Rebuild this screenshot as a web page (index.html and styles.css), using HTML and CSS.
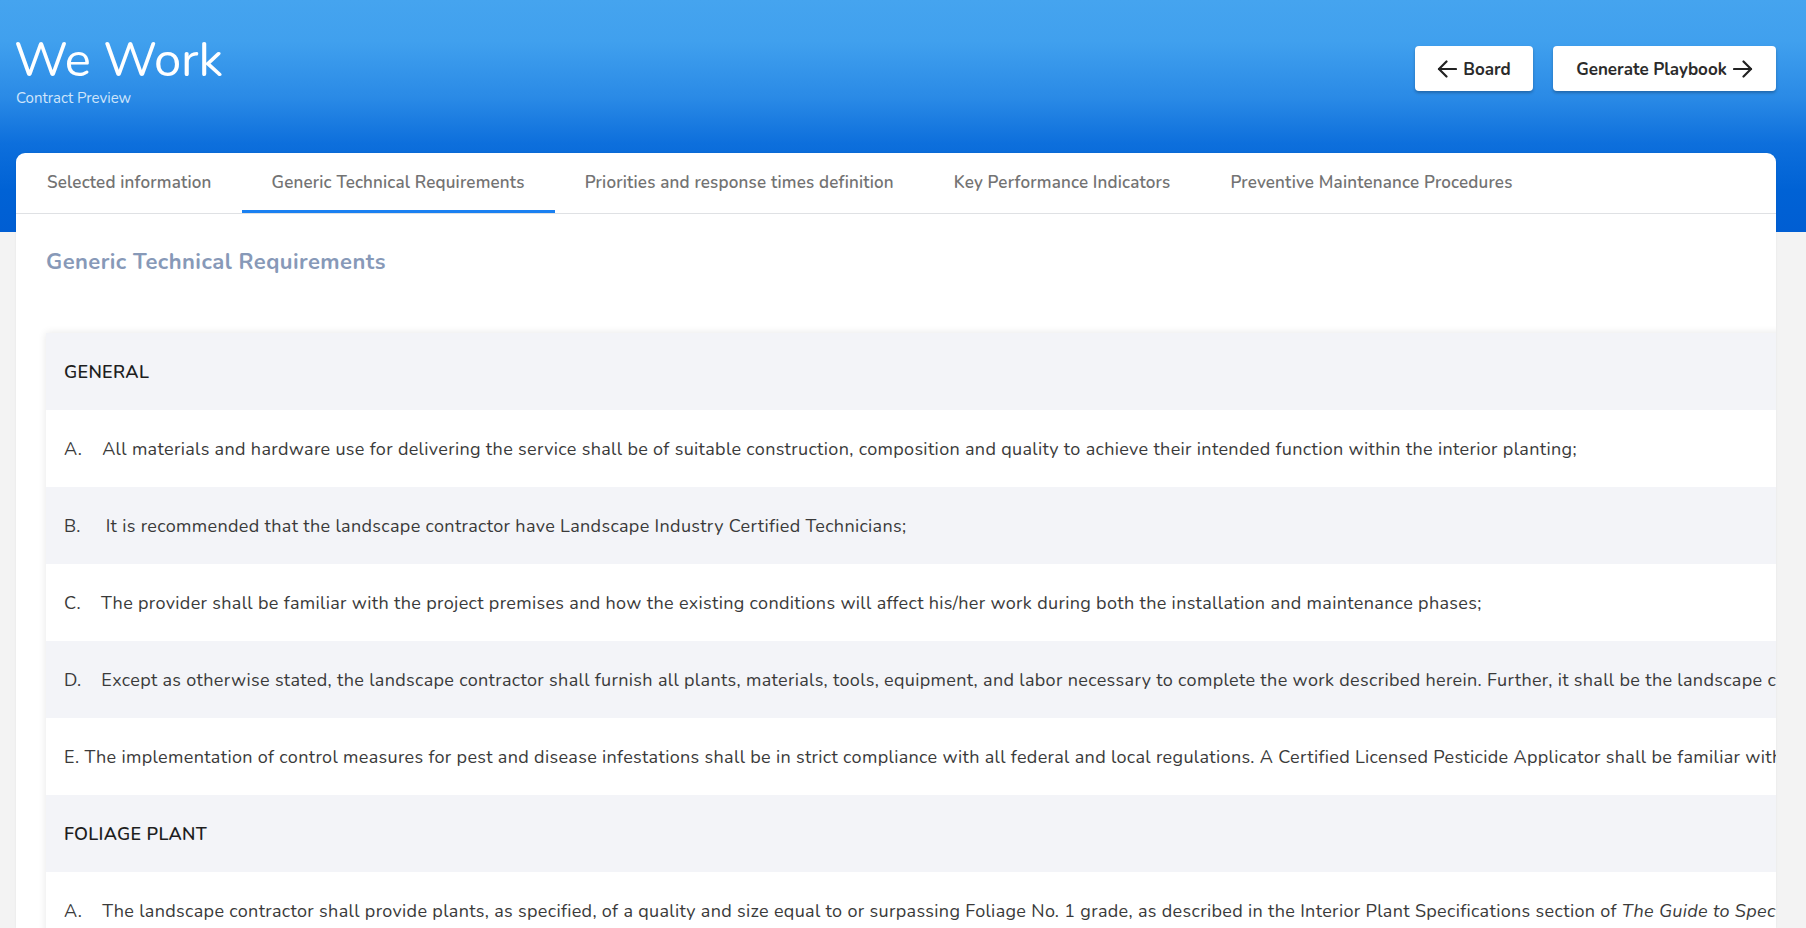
FILE: index.html
```html
<!DOCTYPE html>
<html lang="en">
<head>
<meta charset="utf-8">
<title>We Work - Contract Preview</title>
<link rel="stylesheet" href="styles.css">
</head>
<body>
<div class="hero">
  <div class="hero-bar">
    <div class="brand">
      <h1 class="brand-title">We Work</h1>
      <div class="brand-sub">Contract Preview</div>
    </div>
    <div class="actions">
      <button class="btn btn-board">
        <svg class="ico" width="20" height="18" viewBox="0 0 20 18" fill="none" stroke="#222" stroke-width="2.2" stroke-linecap="round" stroke-linejoin="round"><path d="M19 9H2"/><path d="M9.5 1.5L2 9l7.5 7.5"/></svg>
        <span>Board</span>
      </button>
      <button class="btn btn-gen">
        <span>Generate Playbook</span>
        <svg class="ico" width="20" height="18" viewBox="0 0 20 18" fill="none" stroke="#222" stroke-width="2.2" stroke-linecap="round" stroke-linejoin="round"><path d="M1 9h17"/><path d="M10.5 1.5L18 9l-7.5 7.5"/></svg>
      </button>
    </div>
  </div>
</div>
<main class="main">
  <section class="card">
    <nav class="tabs">
      <a class="tab">Selected information</a>
      <a class="tab active">Generic Technical Requirements</a>
      <a class="tab">Priorities and response times definition</a>
      <a class="tab">Key Performance Indicators</a>
      <a class="tab">Preventive Maintenance Procedures</a>
    </nav>
    <div class="card-body">
      <h2 class="section-title">Generic Technical Requirements</h2>
      <div class="table">
        <div class="row head"><span class="cell">GENERAL</span></div>
        <div class="row"><span class="cell">A.&nbsp;&nbsp;&nbsp;&nbsp;All materials and hardware use for delivering the service shall be of suitable construction, composition and quality to achieve their intended function within the interior planting;</span></div>
        <div class="row"><span class="cell">B.&nbsp;&nbsp;&nbsp;&nbsp;&nbsp;It is recommended that the landscape contractor have Landscape Industry Certified Technicians;</span></div>
        <div class="row"><span class="cell">C.&nbsp;&nbsp;&nbsp;&nbsp;The provider shall be familiar with the project premises and how the existing conditions will affect his/her work during both the installation and maintenance phases;</span></div>
        <div class="row"><span class="cell">D.&nbsp;&nbsp;&nbsp;&nbsp;Except as otherwise stated, the landscape contractor shall furnish all plants, materials, tools, equipment, and labor necessary to complete the work described herein. Further, it shall be the landscape contractor's responsibility to maintain the plants.</span></div>
        <div class="row"><span class="cell">E. The implementation of control measures for pest and disease infestations shall be in strict compliance with all federal and local regulations. A Certified Licensed Pesticide Applicator shall be familiar with the regulations.</span></div>
        <div class="row head"><span class="cell">FOLIAGE PLANT</span></div>
        <div class="row"><span class="cell">A.&nbsp;&nbsp;&nbsp;&nbsp;The landscape contractor shall provide plants, as specified, of a quality and size equal to or surpassing Foliage No. 1 grade, as described in the Interior Plant Specifications section of <em>The Guide to Specifications for Interior Landscaping</em>.</span></div>
      </div>
    </div>
  </section>
</main>
</body>
</html>
```
FILE: styles.css
```css
* { box-sizing: border-box; }
html, body { margin: 0; padding: 0; }
body {
  background: #f3f3f3;
  font-family: "Nunito", "Lato", "Open Sans", sans-serif;
  color: #333;
  overflow: hidden;
  height: 928px;
}
.hero {
  height: 232px;
  background: linear-gradient(180deg, #45a4ef 0%, #40a0ee 18%, #2a8ae6 42%, #0d6fdc 62%, #0062d5 82%, #005ed3 100%);
}
.hero-bar {
  display: flex;
  justify-content: space-between;
  align-items: flex-start;
  padding: 0 30px 0 16px;
}
.brand-title {
  margin: 0 0 0 -2px;
  padding-top: 32px;
  font-size: 49px;
  line-height: 55px;
  font-weight: 400;
  color: #fff;
  letter-spacing: -0.2px;
}
.brand-sub {
  margin-top: 2px;
  font-size: 15px;
  line-height: 18px;
  color: #cfe5fb;
}
.actions {
  display: flex;
  gap: 20px;
  padding-top: 46px;
}
.btn {
  height: 45px;
  display: flex;
  align-items: center;
  justify-content: center;
  gap: 6px;
  background: #fff;
  border: 0;
  border-radius: 4px;
  box-shadow: 0 2px 3px rgba(0, 0, 0, 0.25);
  font-family: inherit;
  font-size: 17px;
  font-weight: 700;
  color: #2b2b2b;
  padding: 1px 0 0;
}
.btn-board { width: 118px; }
.btn-gen { width: 223px; }
.main {
  margin-top: -79px;
  padding: 0 30px 0 16px;
}
.card {
  background: #fff;
  border-radius: 9px 9px 0 0;
  overflow: hidden;
  height: 775px;
  box-shadow: 0 0 2px rgba(0, 0, 0, 0.08);
}
.tabs {
  display: flex;
  padding-left: 1px;
  height: 61px;
  border-bottom: 1px solid #dfe1e4;
}
.tab {
  padding: 2px 30px 0;
  display: flex;
  align-items: center;
  font-size: 17px;
  letter-spacing: 0.18px;
  font-weight: 600;
  color: #737373;
  border-bottom: 3px solid transparent;
  white-space: nowrap;
}
.tab.active { border-bottom-color: #1a80f1; }
.card-body {
  padding: 0 0 0 30px;
}
.section-title {
  margin: 0;
  padding-top: 35px;
  height: 119px;
  font-size: 22px;
  letter-spacing: 0.45px;
  line-height: 26px;
  font-weight: 700;
  color: #8799b8;
}
.table {
  box-shadow: 0 0 8px rgba(0, 0, 0, 0.1);
  width: 2400px;
}
.row {
  height: 77px;
  display: flex;
  align-items: center;
  padding: 0 18px;
  font-size: 18px;
  letter-spacing: 0.33px;
  color: #3a3a3a;
  white-space: nowrap;
  background: #fff;
}
.cell { display: block; }
.row:nth-child(odd) { background: #f3f4f8; }
.row.head {
  font-weight: 600;
  color: #1e1e1e;
}
```
